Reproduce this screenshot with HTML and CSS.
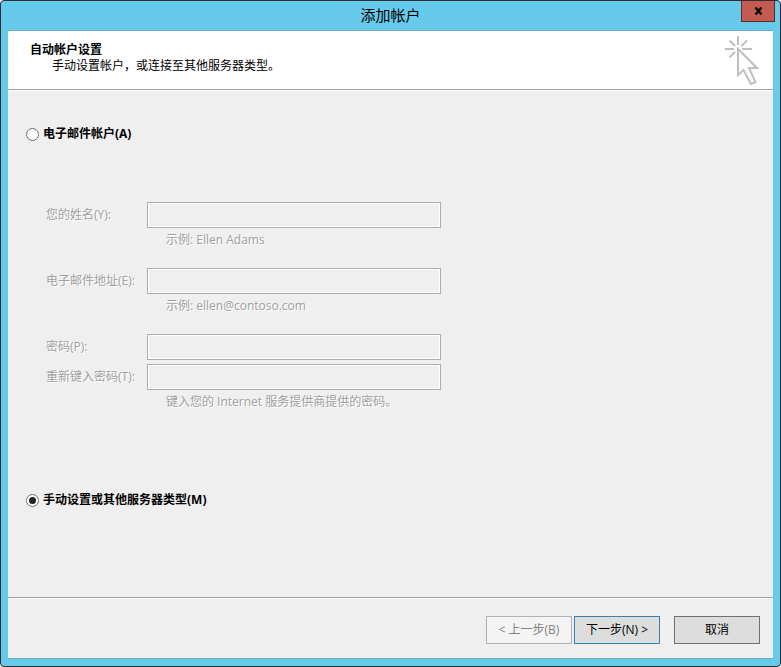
FILE: index.html
```
<!DOCTYPE html>
<html lang="zh-CN">
<head>
  <meta charset="UTF-8">
  <meta name="viewport" content="width=device-width, initial-scale=1.0">
  <title>添加帐户</title>
  <link rel="stylesheet" href="styles.css">
</head>
<body>
  <form class="window">
    <!-- Title bar -->
    <div class="titlebar">
      <h1>添加帐户</h1>
      <button type="button" class="close" aria-label="关闭">
        <svg width="9" height="8" viewBox="0 0 9 8"><path d="M1.5 0.5 L7.5 7.5 M7.5 0.5 L1.5 7.5" stroke="#000" stroke-width="2.2" fill="none"/></svg>
      </button>
    </div>

    <div class="dialog">
      <!-- Wizard header -->
      <header class="header">
        <div>
          <h2>自动帐户设置</h2>
          <p>手动设置帐户，或连接至其他服务器类型。</p>
        </div>
        <svg class="cursor" width="34" height="50" viewBox="0 0 34 50" fill="none" stroke="#bfbfbf" stroke-width="2">
          <path d="M13 0V9M0 13H9M17 13H27M4.500 4.500L10 10M22 4.500L16.500 10M4.500 21.500L10 16"/>
          <path d="M13 13V39L18.500 34L26 48L30.500 46L24 32H32Z"/>
        </svg>
      </header>

      <!-- Account options -->
      <main class="content">
        <label class="option"><input type="radio" name="mode">电子邮件帐户(A)</label>

        <div class="fields">
          <label for="name">您的姓名(Y):</label>
          <input type="text" id="name" disabled>
          <p>示例: Ellen Adams</p>

          <label for="email">电子邮件地址(E):</label>
          <input type="text" id="email" disabled>
          <p>示例: ellen@contoso.com</p>

          <label for="password">密码(P):</label>
          <input type="password" id="password" disabled>
          <label for="confirm" class="tight">重新键入密码(T):</label>
          <input type="password" id="confirm" class="tight" disabled>
          <p>键入您的 Internet 服务提供商提供的密码。</p>
        </div>

        <label class="option"><input type="radio" name="mode" checked>手动设置或其他服务器类型(M)</label>
      </main>

      <!-- Buttons -->
      <footer class="footer">
        <button type="button" disabled>&lt; 上一步(B)</button>
        <button type="submit" class="next">下一步(N) &gt;</button>
        <button type="button" class="cancel">取消</button>
      </footer>
    </div>
  </form>
</body>
</html>
```
FILE: styles.css
```
* {
  margin: 0;
  padding: 0;
  box-sizing: border-box;
}

body {
  background: #fff;
  color: #000;
  font: 12px/16px "Open Sans", "Noto Sans CJK SC", sans-serif;
}

button,
input {
  font: inherit;
}

/* Window frame */
.window {
  display: flex;
  flex-direction: column;
  min-height: 100vh;
  padding: 0 7px 7px;
  background: #66caea;
  border: 1px solid #302d36;
  border-radius: 4px;
}

.titlebar {
  display: grid;
  grid-template-columns: 1fr auto 1fr;
  height: 29px;
}

.titlebar h1 {
  grid-column: 2;
  font-size: 15px;
  font-weight: normal;
  line-height: 29px;
}

.close {
  display: flex;
  justify-self: end;
  align-items: center;
  justify-content: center;
  width: 34px;
  height: 21px;
  margin-right: -2px;
  background: #c35b53;
  border: 1px solid #602b2b;
  border-top: 0;
}

.dialog {
  display: flex;
  flex: 1;
  flex-direction: column;
  background: #efefef;
  border: solid #6fabc2;
  border-width: 1px 0;
}

/* Wizard header */
.header {
  display: flex;
  justify-content: space-between;
  height: 59px;
  padding: 5px 14px 0 22px;
  background: #fff;
  border-bottom: 1px solid #a0a0a0;
  box-shadow: 0 1px #fff;
}

.header h2 {
  padding-top: 6px;
  font-size: 12px;
  font-weight: bold;
}

.header p {
  padding-left: 22px;
}

/* Account options */
.content {
  flex: 1;
  padding: 36px 18px;
}

.option {
  display: flex;
  align-items: center;
  gap: 4px;
  font-weight: bold;
}

.option input {
  display: grid;
  place-items: center;
  width: 13px;
  height: 13px;
  appearance: none;
  background: #fff;
  border: 1px solid #707070;
  border-radius: 50%;
}

.option input:checked::before {
  width: 7px;
  height: 7px;
  background: #222;
  border-radius: 50%;
  content: "";
}

.fields {
  display: grid;
  grid-template-columns: 101px minmax(0, 294px);
  align-items: center;
  padding: 60px 0 82px 20px;
  color: #a0a0a0;
  text-shadow: 1px 1px #fff;
}

.fields input {
  height: 26px;
  background: #efefef;
  border: 1px solid #abadb3;
  box-shadow: inset 0 0 0 1px #fff;
}

.fields p {
  grid-column: 2;
  padding: 4px 0 20px 19px;
}

.fields p:last-child {
  padding-bottom: 0;
}

.fields .tight {
  margin-top: 4px;
}

/* Buttons */
.footer {
  display: flex;
  justify-content: flex-end;
  height: 61px;
  padding: 18px 13px 0;
  border-top: 1px solid #a0a0a0;
  box-shadow: inset 0 1px #fff;
}

.footer button {
  width: 86px;
  height: 28px;
  background: #ddd;
  border: 1px solid #707070;
}

.footer button:disabled {
  color: #838383;
  background: #f4f4f4;
  border-color: #adb2b5;
}

.footer .next {
  margin-left: 2px;
  border-color: #3c7fb1;
}

.footer .cancel {
  margin-left: 14px;
}
```
